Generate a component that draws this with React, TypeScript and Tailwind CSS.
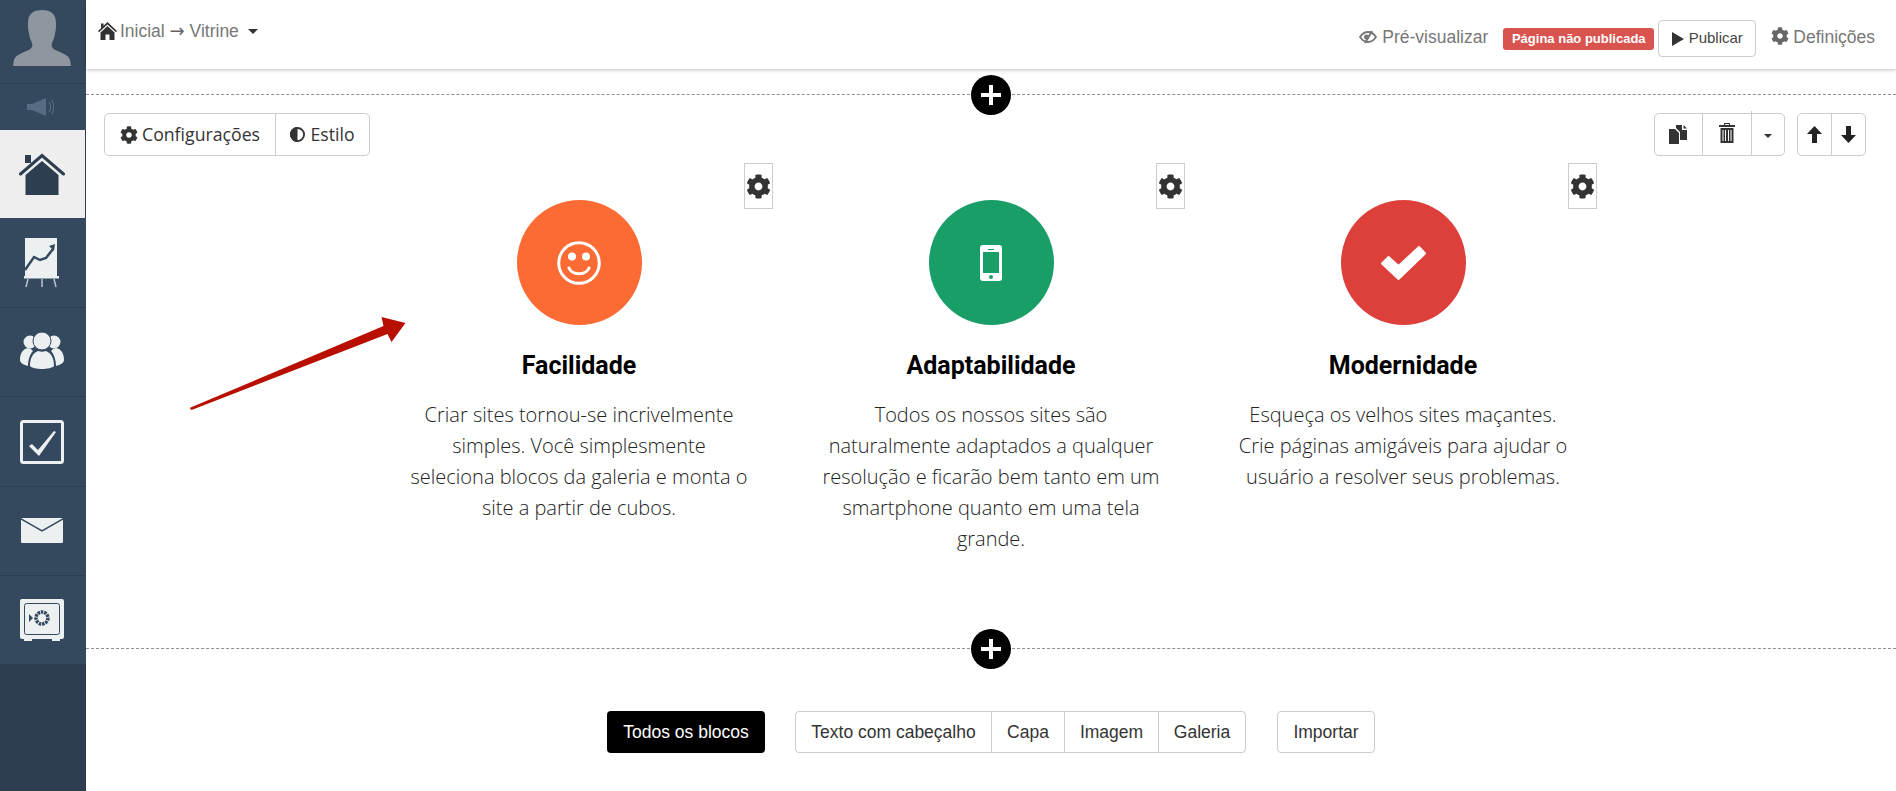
import React from "react";
import { FaCog } from "react-icons/fa";

const Sans = "font-['Liberation_Sans',Arial,sans-serif]";

function Avatar() {
  return (
    <svg width="58" height="56" viewBox="0 0 58 56" fill="#8e969f">
      <path d="M29 0c9 0 14 4 14 13 0 4 0 8-1 10 0 4-2 7-3 10-1 3 0 5 3 7 5 2 14 5 15 10l1 6H0l1-6c1-5 10-8 15-10 3-2 4-4 3-7-1-3-3-6-3-10-1-2-1-6-1-10C15 4 20 0 29 0z" />
    </svg>
  );
}
function Speaker() {
  return (
    <svg width="28" height="18" viewBox="0 0 28 18">
      <rect x="0" y="6" width="5" height="6" fill="#566c83" />
      <path d="M5 6l14-6v18L5 12z" fill="#566c83" />
      <path d="M22 4c2 3 2 7 0 10M25 2c2 4 2 10 0 14" stroke="#566c83" strokeWidth="1.2" fill="none" />
    </svg>
  );
}
function HomeIcon() {
  return (
    <svg width="46" height="42" viewBox="0 0 46 42">
      <path d="M1.500 21L23 2.500 44.500 21" fill="none" stroke="#2c3e50" strokeWidth="3" strokeLinecap="round" />
      <rect x="6" y="2" width="6" height="8" fill="#2c3e50" />
      <path d="M6.500 22L23 8l16.500 14v20h-33z" fill="#2c3e50" />
    </svg>
  );
}
function ChartIcon() {
  return (
    <svg width="36" height="50" viewBox="0 0 36 50">
      <rect x="1" y="0" width="32" height="38" fill="#ecf0f1" />
      <rect x="0" y="38" width="35" height="2.5" fill="#ecf0f1" />
      <path d="M4 41l-2 8M18 41v8M30 41l2 8" stroke="#b9c3cb" strokeWidth="1.5" />
      <path d="M1 32l9-13 6 3 6-2 7-9" fill="none" stroke="#34495e" strokeWidth="2.500" />
      <path d="M25 8l6-2-1 7z" fill="#34495e" />
    </svg>
  );
}
function PeopleIcon() {
  return (
    <svg width="44" height="40" viewBox="0 0 44 40">
      <circle cx="10" cy="10" r="6.500" fill="#ecf0f1" />
      <circle cx="34" cy="10" r="6.500" fill="#ecf0f1" />
      <path d="M0 28c0-7 3-11 8-12 4 1 4 2 5 3-3 3-5 9-5 15-4-1-8-3-8-6zM44 28c0-7-3-11-8-12-4 1-4 2-5 3 3 3 5 9 5 15 4-1 8-3 8-6z" fill="#ecf0f1" />
      <circle cx="22" cy="9" r="9" fill="#ecf0f1" stroke="#34495e" strokeWidth="1" />
      <path d="M10 34c0-8 3-13 8-15 3 1 5 1 8 0 5 2 8 7 8 15-3 4-21 4-24 0z" fill="#ecf0f1" />
    </svg>
  );
}
function CheckIcon() {
  return (
    <svg width="44" height="44" viewBox="0 0 44 44">
      <rect x="1.500" y="1.500" width="41" height="41" rx="2" fill="none" stroke="#ecf0f1" strokeWidth="3" />
      <path d="M9 26l3-2 6 6L34 11l2 1-17 24z" fill="#ecf0f1" />
    </svg>
  );
}
function MailIcon() {
  return (
    <svg width="42" height="26" viewBox="0 0 42 26">
      <rect x="0" y="0" width="42" height="25" rx="1.500" fill="#ecf0f1" />
      <path d="M0 1l21 12L42 1" fill="none" stroke="#34495e" strokeWidth="1.500" />
    </svg>
  );
}
function SafeIcon() {
  return (
    <svg width="44" height="42" viewBox="0 0 44 42">
      <path d="M2 0h40a2 2 0 012 2v36a2 2 0 01-2 2H2a2 2 0 01-2-2V2a2 2 0 012-2z" fill="#ecf0f1" />
      <rect x="4" y="40" width="8" height="2" fill="#ecf0f1" />
      <rect x="32" y="40" width="8" height="2" fill="#ecf0f1" />
      <rect x="4.500" y="4.500" width="35" height="31" rx="2" fill="none" stroke="#34495e" strokeWidth="1" />
      <circle cx="22" cy="19" r="6" fill="none" stroke="#34495e" strokeWidth="3.500" strokeDasharray="2.500 0.800" />
      <path d="M9 15l4 4-4 4z" fill="#34495e" />
    </svg>
  );
}

function Half() {
  return (
    <svg width="15" height="15" viewBox="0 0 16 16">
      <circle cx="8" cy="8" r="7" fill="#fff" stroke="#333" strokeWidth="2" />
      <path d="M8 0a8 8 0 000 16z" fill="#333" />
    </svg>
  );
}
function Copy() {
  return (
    <svg width="19" height="19" viewBox="0 0 19 19" fill="#333">
      <path d="M0 4h6l4 4v11H0z" />
      <path d="M7 3V0h6v5h5v10h-7V7z" />
      <path d="M14.500 0L18 3.500h-3.500z" />
    </svg>
  );
}
function Trash() {
  return (
    <svg width="16" height="20" viewBox="0 0 16 20" fill="#333">
      <path d="M5 0h6v2h5v2H0V2h5zM6 1v1h4V1z" fillRule="evenodd" />
      <path d="M1.500 5h13v15h-13zM3.500 7v11h1V7zM6 7v11h1V7zM9 7v11h1V7zM11.500 7v11h1V7z" fillRule="evenodd" />
    </svg>
  );
}
function ArrowUp() {
  return (
    <svg width="15" height="17" viewBox="0 0 15 17" fill="#222">
      <path d="M7.500 0L15 8H10v9H5V8H0z" />
    </svg>
  );
}
function ArrowDown() {
  return (
    <svg width="15" height="17" viewBox="0 0 15 17" fill="#222">
      <path d="M7.500 17L0 9h5V0h5v9h5z" />
    </svg>
  );
}
function Caret() {
  return <span className="inline-block w-0 h-0 border-x-[4px] border-x-transparent border-t-[4px] border-t-[#333]" />;
}
function GlyphHome() {
  return (
    <svg width="19" height="18" viewBox="0 0 19 18" fill="#333">
      <path d="M9.500 0L19 9l-1 1.200L9.500 2.500 1 10.200 0 9l3-2.800V1.500h2.500v2.300z" />
      <path d="M9.500 4L16.500 10.500V18H11.500V12.500H7.500V18H2.500V10.500z" />
    </svg>
  );
}
function GlyphEye() {
  return (
    <svg width="18" height="14" viewBox="0 0 18 14" fill="none" stroke="#777">
      <path d="M1 7c2-3 5-5 8-5s6 2 8 5c-2 3-5 5-8 5S3 10 1 7z" strokeWidth="1.800" />
      <circle cx="7.500" cy="7" r="2.500" fill="#777" stroke="none" />
      <path d="M13 1L6 13" strokeWidth="2" stroke="#777" />
    </svg>
  );
}

function Smile() {
  return (
    <svg width="44" height="44" viewBox="0 0 44 44" fill="none" stroke="#fff">
      <circle cx="22" cy="22" r="20.300" strokeWidth="3" />
      <circle cx="15" cy="15.500" r="4" fill="#fff" stroke="none" />
      <circle cx="29" cy="15.500" r="4" fill="#fff" stroke="none" />
      <path d="M12 27c3 7.500 17 7.500 20 0" strokeWidth="3" strokeLinecap="round" />
    </svg>
  );
}
function Phone() {
  return (
    <svg width="22" height="36" viewBox="0 0 22 36">
      <path d="M3 0h16a3 3 0 013 3v30a3 3 0 01-3 3H3a3 3 0 01-3-3V3a3 3 0 013-3z" fill="#fff" />
      <rect x="3" y="7" width="16" height="21" fill="#1a9e68" />
      <rect x="8" y="4" width="6" height="1" fill="#1a9e68" />
      <circle cx="11" cy="32" r="2" fill="#1a9e68" />
    </svg>
  );
}
function Tick() {
  return (
    <svg width="46" height="36" viewBox="0 0 46 36">
      <path d="M39 2L45 8.500 18.500 34 2 18.500 8.500 12 18.500 21z" fill="#fff" stroke="#fff" strokeWidth="2" strokeLinejoin="round" />
    </svg>
  );
}

function PlusBtn() {
  return (
    <div className="absolute left-1/2 -translate-x-1/2 -top-[20px] w-10 h-10 rounded-full bg-black flex items-center justify-center">
      <svg width="22" height="22" viewBox="0 0 22 22">
        <path d="M9 1h4v8h8v4h-8v8H9v-8H1V9h8z" fill="#fff" />
      </svg>
    </div>
  );
}

function Gear() {
  return (
    <div className="absolute top-[7px] right-[12px] w-[29px] h-[46px] border border-[#ccc] bg-white flex items-center justify-center">
      <FaCog className="text-[25px] text-[#333] shrink-0" />
    </div>
  );
}

const cols = [
  {
    bg: "bg-[#fd6b35]",
    icon: <Smile />,
    title: "Facilidade",
    lines: ["Criar sites tornou-se incrivelmente", "simples. Você simplesmente", "seleciona blocos da galeria e monta o", "site a partir de cubos."],
  },
  {
    bg: "bg-[#1a9e68]",
    icon: <Phone />,
    title: "Adaptabilidade",
    lines: ["Todos os nossos sites são", "naturalmente adaptados a qualquer", "resolução e ficarão bem tanto em um", "smartphone quanto em uma tela", "grande."],
  },
  {
    bg: "bg-[#dd403b]",
    icon: <Tick />,
    title: "Modernidade",
    lines: ["Esqueça os velhos sites maçantes.", "Crie páginas amigáveis para ajudar o", "usuário a resolver seus problemas."],
  },
];

const nav = [
  { icon: <HomeIcon />, h: "h-[89px]", active: true },
  { icon: <ChartIcon />, h: "h-[89px]" },
  { icon: <PeopleIcon />, h: "h-[89px]" },
  { icon: <CheckIcon />, h: "h-[90px]" },
  { icon: <MailIcon />, h: "h-[89px]" },
  { icon: <SafeIcon />, h: "h-[89px]" },
];

export default function App() {
  return (
    <div className={`flex h-[791px] w-[1896px] overflow-hidden bg-white ${Sans}`}>
      <aside className="w-[86px] shrink-0 bg-[#2d3e50] flex flex-col">
        <div className="h-[84px] bg-[#34495e] border-b border-[#2c3e50] flex justify-center pt-[10px] pr-[2px]">
          <Avatar />
        </div>
        <div className="h-[46px] bg-[#34495e] flex items-center justify-center pr-[4px]">
          <Speaker />
        </div>
        {nav.map((n, i) => (
          <div
            key={i}
            className={`${n.h} flex items-center justify-center border-b pr-[2px] ${
              n.active ? "bg-[#eeeeee] border-[#34495e] border-r border-r-[#2c3e50]" : "bg-[#34495e] border-[#2c3e50]"
            }`}
          >
            {n.icon}
          </div>
        ))}
      </aside>

      <main className="flex-1 flex flex-col min-w-0">
        <header className="h-[69px] shrink-0 flex justify-between items-start shadow-[0_1px_4px_rgba(0,0,0,0.25)] pl-[12px] pr-[21px] relative z-10 bg-white">
          <div className="flex items-center gap-[3px] mt-[20px] text-[17.500px] text-[#777] leading-[22px]">
            <GlyphHome />
            <span className="whitespace-nowrap">
              Inicial <span className="font-['DejaVu_Sans',sans-serif] text-[18px] text-[#666]">→</span> Vitrine
            </span>
            <span className="ml-[6px] mt-[1px] inline-block w-0 h-0 border-x-[5px] border-x-transparent border-t-[5px] border-t-[#333]" />
          </div>
          <div className="flex items-start">
            <div className="flex items-center gap-[5px] mt-[26px] text-[17.500px] leading-[22px] text-[#777] mr-[15px]">
              <GlyphEye />
              <span>Pré-visualizar</span>
            </div>
            <span className="mt-[28px] h-[22px] w-[151px] text-center rounded-[3px] bg-[#d9534f] text-white font-bold text-[13px] leading-[22px]">
              Página não publicada
            </span>
            <div className="ml-[4px] mt-[20px] h-[37px] w-[98px] rounded-[4px] border border-[#ccc] flex items-center justify-center gap-[5px] text-[15px] text-[#444]">
              <svg width="12" height="14" viewBox="0 0 12 14"><path d="M0 0l12 7L0 14z" fill="#333" /></svg>
              <span>Publicar</span>
            </div>
            <div className="flex items-center gap-[4px] ml-[15px] mt-[26px] text-[17.500px] leading-[22px] text-[#777]">
              <FaCog className="text-[18px] -mt-[3px] text-[#666]" />
              <span>Definições</span>
            </div>
          </div>
        </header>

        <section className="mt-[25px] h-[554px] shrink-0 border-t border-dashed border-[#8f8f8f] relative">
          <PlusBtn />
          <div className="flex justify-between pt-[18px] pl-[18px] pr-[30px]">
            <div className="flex h-[43px] border border-[#ccc] rounded-[5px] font-['Open_Sans',sans-serif] text-[17.700px] text-[#333]">
              <div className="w-[171px] flex items-center justify-center gap-[4px] border-r border-[#ccc]">
                <FaCog className="text-[18px]" />
                <span>Configurações</span>
              </div>
              <div className="w-[93px] flex items-center justify-center gap-[5px]">
                <Half />
                <span>Estilo</span>
              </div>
            </div>
            <div className="flex gap-[12px]">
              <div className="flex h-[43px] border border-[#ccc] rounded-[5px]">
                <div className="w-[48px] flex items-center justify-center border-r border-[#ccc] -mt-[1px]"><Copy /></div>
                <div className="w-[49px] flex items-center justify-center border-r border-[#ccc] -mt-[3px]"><Trash /></div>
                <div className="w-[32px] flex items-center justify-center pt-[3px]"><Caret /></div>
              </div>
              <div className="flex h-[43px] border border-[#ccc] rounded-[5px]">
                <div className="w-[34px] flex items-center justify-center border-r border-[#ccc]"><ArrowUp /></div>
                <div className="w-[33px] flex items-center justify-center"><ArrowDown /></div>
              </div>
            </div>
          </div>

          <div className="mx-auto w-[1236px] grid grid-cols-3">
            {cols.map((c) => (
              <div key={c.title} className="relative flex flex-col items-center pt-[44px]">
                <Gear />
                <div className={`w-[125px] h-[125px] rounded-full flex items-center justify-center ${c.bg}`}>{c.icon}</div>
                <h3 className="mt-[24px] font-['Roboto',sans-serif] font-bold text-[25px] leading-[34px] text-black">{c.title}</h3>
                <p className="mt-[16px] font-['Open_Sans',sans-serif] font-light text-[20px] leading-[31px] text-[#222] text-center whitespace-nowrap">
                  {c.lines.map((l, i) => (
                    <span key={i} className="block">{l}</span>
                  ))}
                </p>
              </div>
            ))}
          </div>

          <svg className="absolute left-[104px] top-[220px]" width="225" height="100" viewBox="190 315 225 100">
            <path d="M189.500 408l194-82-2-9 24 6-14 19-4-8-196 76z" fill="#b80f00" />
          </svg>
        </section>

        <div className="border-t border-dashed border-[#8f8f8f] relative flex-1">
          <PlusBtn />
          <div className="flex justify-center items-start pt-[62px] text-[17.500px] text-[#333]">
            <div className="h-[42px] w-[158px] rounded-[4px] bg-black text-white flex items-center justify-center">Todos os blocos</div>
            <div className="ml-[30px] flex h-[42px] border border-[#ccc] rounded-[4px]">
              <div className="w-[196px] flex items-center justify-center border-r border-[#ccc]">Texto com cabeçalho</div>
              <div className="w-[73px] flex items-center justify-center border-r border-[#ccc]">Capa</div>
              <div className="w-[94px] flex items-center justify-center border-r border-[#ccc]">Imagem</div>
              <div className="w-[86px] flex items-center justify-center">Galeria</div>
            </div>
            <div className="ml-[31px] h-[42px] w-[98px] border border-[#ccc] rounded-[4px] flex items-center justify-center">Importar</div>
          </div>
        </div>
      </main>
    </div>
  );
}
